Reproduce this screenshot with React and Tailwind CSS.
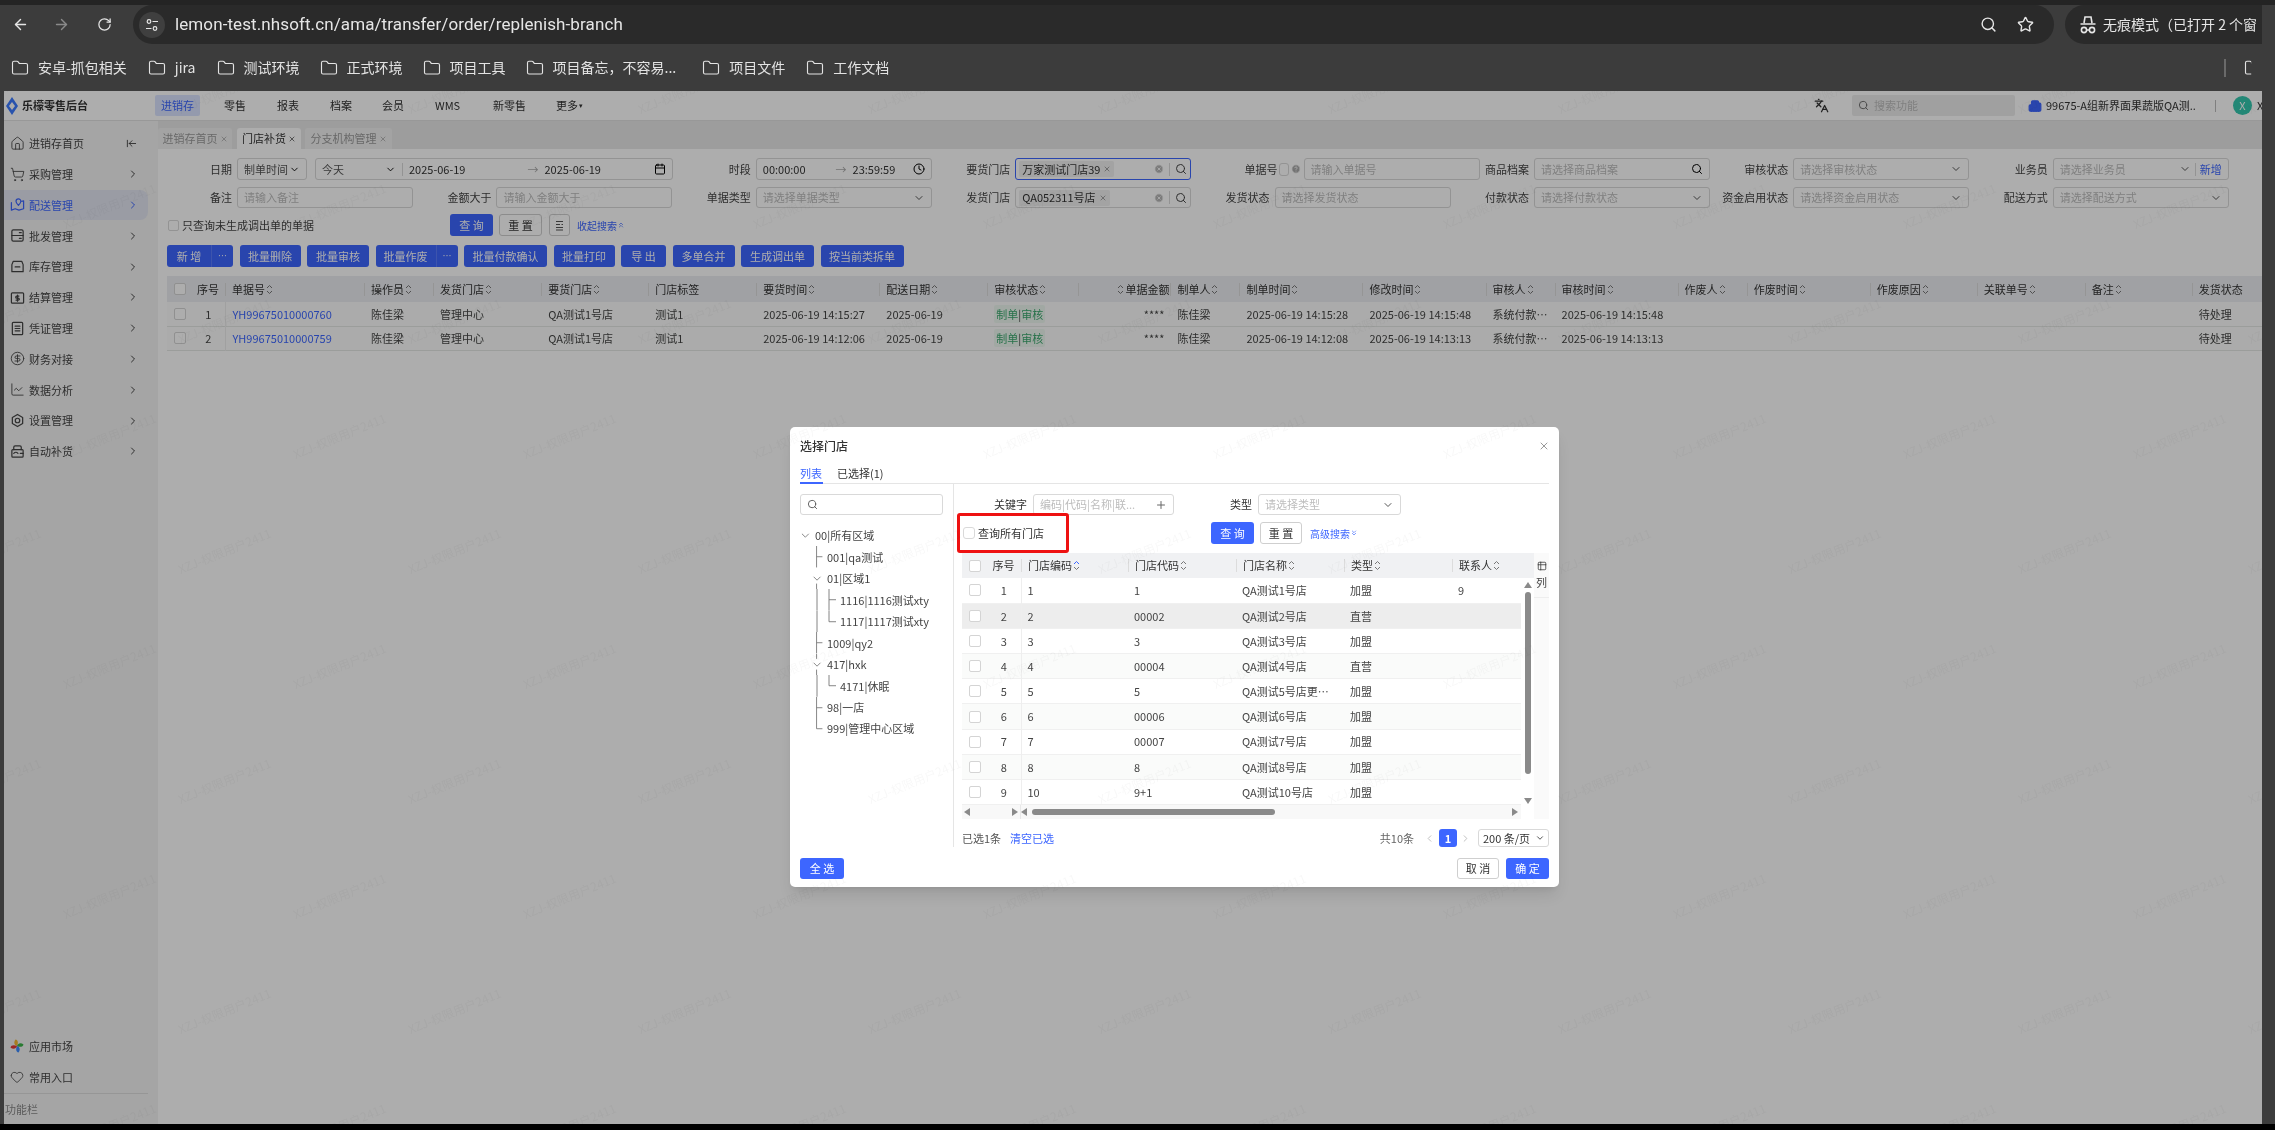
import React from 'react';
import {
    ArrowLeft, ArrowRight, RotateCw, Search, Star, Folder, Languages, House, ShoppingCart, ChevronRight,
    ChevronDown, ChevronLeft, Calendar, Clock, X, Plus, CircleDollarSign, ChartLine, Heart, ArrowLeftToLine,
    CircleHelp, Building2, Table2, CircleX, ChevronsUp, ChevronsDown,
} from 'lucide-react';

const bookmarks = [
    { name: '安卓-抓包相关', cls: 'ml-[11px]' },
    { name: 'jira', cls: 'ml-[21px]' },
    { name: '测试环境', cls: 'ml-[21px]' },
    { name: '正式环境', cls: 'ml-[20px]' },
    { name: '项目工具', cls: 'ml-[20px]' },
    { name: '项目备忘，不容易...', cls: 'ml-[20px]' },
    { name: '项目文件', cls: 'ml-[26px]' },
    { name: '工作文档', cls: 'ml-[21px]' },
];

const BoxIcon = ({ children }) => (
    <svg width="15" height="15" viewBox="0 0 16 16" fill="none" stroke="currentColor" strokeWidth="1.3" strokeLinecap="round" strokeLinejoin="round">
        {children}
    </svg>
);

const sideItems = [
    { name: '进销存首页', icon: <House size={15} strokeWidth={1.4} /> },
    { name: '采购管理', icon: <ShoppingCart size={15} strokeWidth={1.4} /> },
    { name: '配送管理', active: true, icon: <BoxIcon><path d="M1.5 6v8l4-1.5 4 1.5 5-1.5V4l-2 .6" /><path d="M9 2a2.6 2.6 0 0 1 2.6 2.6C11.6 6.4 9 9 9 9S6.4 6.4 6.4 4.6A2.6 2.6 0 0 1 9 2z" /></BoxIcon> },
    { name: '批发管理', icon: <BoxIcon><rect x="2" y="2" width="12" height="12" rx="1.5" /><path d="M2 8h12M10 5h2M10 11h2" /></BoxIcon> },
    { name: '库存管理', icon: <BoxIcon><path d="M3.5 2.5h9L14 6v7.5H2V6z" /><path d="M5.5 8.5h5" /></BoxIcon> },
    { name: '结算管理', icon: <BoxIcon><rect x="1.5" y="3" width="13" height="11" rx="1" /><path d="M9.5 6.5H7.2a1 1 0 0 0 0 2.2h1.6a1 1 0 0 1 0 2.2H6.5M8 5.5v6.5" /></BoxIcon> },
    { name: '凭证管理', icon: <BoxIcon><rect x="2.5" y="1.5" width="11" height="13" rx="1" /><path d="M5.5 5.5h5M5.5 8h5M5.5 10.5h5" /></BoxIcon> },
    { name: '财务对接', icon: <CircleDollarSign size={15} strokeWidth={1.4} /> },
    { name: '数据分析', icon: <ChartLine size={15} strokeWidth={1.4} /> },
    { name: '设置管理', icon: <BoxIcon><path d="M8 1.5l5.5 3.2v6.6L8 14.5l-5.5-3.2V4.7z" /><circle cx="8" cy="8" r="2.4" /></BoxIcon> },
    { name: '自动补货', icon: <BoxIcon><path d="M4 6V3.5A1.5 1.5 0 0 1 5.5 2h5A1.5 1.5 0 0 1 12 3.5V6" /><rect x="2" y="6" width="12" height="8" rx="1" /><path d="M4 10c1.5-1.6 3-1.6 4.5 0M11 10h3" /></BoxIcon> },
];

// 列宽按截图量的
const mainCols = [
    { w: 'w-[25px]' }, { w: 'w-[33px]', title: '序号' }, { w: 'w-[139px]', title: '单据号', sort: true },
    { w: 'w-[69px]', title: '操作员', sort: true }, { w: 'w-[108px]', title: '发货门店', sort: true },
    { w: 'w-[107px]', title: '要货门店', sort: true }, { w: 'w-[108px]', title: '门店标签' },
    { w: 'w-[123px]', title: '要货时间', sort: true }, { w: 'w-[108px]', title: '配送日期', sort: true },
    { w: 'w-[91px]', title: '审核状态', sort: true }, { w: 'w-[92px]', title: '单据金额', sort: true, right: true },
    { w: 'w-[69px]', title: '制单人', sort: true }, { w: 'w-[123px]', title: '制单时间', sort: true },
    { w: 'w-[123px]', title: '修改时间', sort: true }, { w: 'w-[69px]', title: '审核人', sort: true },
    { w: 'w-[123px]', title: '审核时间', sort: true }, { w: 'w-[69px]', title: '作废人', sort: true },
    { w: 'w-[123px]', title: '作废时间', sort: true }, { w: 'w-[107px]', title: '作废原因', sort: true },
    { w: 'w-[108px]', title: '关联单号', sort: true }, { w: 'w-[107px]', title: '备注', sort: true },
    { w: 'w-[70px]', title: '发货状态' },
];

const mainRows = [
    ['1', 'YH99675010000760', '陈佳梁', '管理中心', 'QA测试1号店', '测试1', '2025-06-19 14:15:27', '2025-06-19', 'tag', '****', '陈佳梁', '2025-06-19 14:15:28', '2025-06-19 14:15:48', '系统付款…', '2025-06-19 14:15:48', '', '', '', '', '', '待处理'],
    ['2', 'YH99675010000759', '陈佳梁', '管理中心', 'QA测试1号店', '测试1', '2025-06-19 14:12:06', '2025-06-19', 'tag', '****', '陈佳梁', '2025-06-19 14:12:08', '2025-06-19 14:13:13', '系统付款…', '2025-06-19 14:13:13', '', '', '', '', '', '待处理'],
];

const storeCols = [
    { w: 'w-[25px]' }, { w: 'w-[34px]', title: '序号' }, { w: 'w-[107px]', title: '门店编码', sort: true, active: true },
    { w: 'w-[108px]', title: '门店代码', sort: true }, { w: 'w-[108px]', title: '门店名称', sort: true },
    { w: 'w-[108px]', title: '类型', sort: true }, { w: 'w-[69px]', title: '联系人', sort: true },
];

const stores = [
    ['1', '1', '1', 'QA测试1号店', '加盟', '9'],
    ['2', '2', '00002', 'QA测试2号店', '直营', ''],
    ['3', '3', '3', 'QA测试3号店', '加盟', ''],
    ['4', '4', '00004', 'QA测试4号店', '直营', ''],
    ['5', '5', '5', 'QA测试5号店更…', '加盟', ''],
    ['6', '6', '00006', 'QA测试6号店', '加盟', ''],
    ['7', '7', '00007', 'QA测试7号店', '加盟', ''],
    ['8', '8', '8', 'QA测试8号店', '加盟', ''],
    ['9', '10', '9+1', 'QA测试10号店', '加盟', ''],
];

const treeRows = [
    { text: '00|所有区域', svg: 'w-[15px]', d: 'M2 9l3.500 3.500L9 9' },
    { text: '001|qa测试', svg: 'w-[27px]', d: 'M17 0v22M17 11h6' },
    { text: '01|区域1', svg: 'w-[27px]', d: 'M14 9l3.500 3.500L21 9M17 16v6' },
    { text: '1116|1116测试xty', svg: 'w-[40px]', d: 'M17 0v22M29 0v22M29 11h7' },
    { text: '1117|1117测试xty', svg: 'w-[40px]', d: 'M17 0v22M29 0v11h7' },
    { text: '1009|qy2', svg: 'w-[27px]', d: 'M17 0v22M17 11h6' },
    { text: '417|hxk', svg: 'w-[27px]', d: 'M14 9l3.500 3.500L21 9M17 0v5M17 16v6' },
    { text: '4171|休眠', svg: 'w-[40px]', d: 'M17 0v22M29 0v11h7' },
    { text: '98|一店', svg: 'w-[27px]', d: 'M17 0v22M17 11h6' },
    { text: '999|管理中心区域', svg: 'w-[27px]', d: 'M17 0v11h6' },
];

const Sort = ({ active }) => (
    <svg width="7" height="13" viewBox="0 0 7 13" fill="none" strokeWidth="1" className="shrink-0">
        <path d="M1 5l2.500-2.500L6 5" stroke={active ? '#3d66ff' : '#777'} />
        <path d="M1 8l2.500 2.500L6 8" stroke="#777" />
    </svg>
);

const Check = () => <span className="block h-[12px] w-[12px] rounded-[2px] border border-[#d4d4d4] bg-white" />;

const Btn = ({ children, className = '' }) => (
    <button className={`h-full rounded-[3px] bg-[#3d66ff] text-[11px] text-white ${className}`}>{children}</button>
);

const Plain = ({ children, className = '' }) => (
    <button className={`rounded-[3px] border border-[#cfcfcf] bg-white text-[11px] text-[#333] ${className}`}>{children}</button>
);

const Box = ({ children, className = 'w-[176px]' }) => (
    <div className={`flex h-full items-center rounded-[3px] border border-[#d9d9d9] bg-white px-[6px] text-[11px] ${className}`}>{children}</div>
);

const Ph = ({ children }) => <span className="flex-1 truncate text-[#bdbdbd]">{children}</span>;

const Cell = ({ label, children, span = '' }) => (
    <div className={`flex h-full items-center ${span}`}>
        <label className="mr-[5px] w-[69px] shrink-0 text-right text-[11px] text-[#444]">{label}</label>
        {children}
    </div>
);

const SelectBox = ({ ph }) => (
    <Box><Ph>{ph}</Ph><ChevronDown size={12} className="text-[#555]" /></Box>
);

const StoreTag = ({ name, focus }) => (
    <Box className={`w-[176px] !pl-[3px] !pr-[3px] ${focus ? '!border-[#3d66ff]' : ''}`}>
        <span className="flex h-[16px] items-center rounded-[2px] bg-[#f0f0f0] px-[3px] text-[#333]">
            {name}<X size={8} className="ml-[3px] text-[#777]" />
        </span>
        <span className="ml-auto flex items-center">
            <CircleX size={10} className="fill-[#b5b5b5] text-white" />
            <span className="mx-[5px] h-[13px] border-l border-[#d9d9d9]" />
            <Search size={12} className="text-[#444]" />
        </span>
    </Box>
);

// 水印，页面上错开铺满
const Watermarks = () => {
    const marks = [];
    for (let r = 0; r < 10; r++) {
        for (let c = 0; c < 11; c++) {
            marks.push({ x: (r % 2 ? 106 : -9) + 230 * c, y: 115 * r - 1 });
        }
    }
    return (
        <div className="pointer-events-none absolute inset-0 z-20 overflow-hidden">
            {marks.map((m, i) => (
                <span
                    key={i}
                    className="absolute -rotate-[22deg] text-[12px] text-black/[.03]"
                    style={{ left: m.x - 50, top: m.y - 8 }}
                >
                    XZJ-权限用户2411
                </span>
            ))}
        </div>
    );
};

const BrowserBar = () => (
    <div className="shrink-0 bg-[#3c3c3c]">
        <div className="flex h-[44px] border-t-[5px] border-[#242424] text-[#e6e6e6]">
            <div className="flex w-[133px] items-center pl-[12px]">
                <ArrowLeft size={17} />
                <ArrowRight size={17} className="ml-[24px] text-[#8a8a8a]" />
                <RotateCw size={15} className="ml-[27px]" />
            </div>
            <div className="flex w-[1921px] items-center rounded-[20px] bg-[#2a2a2a] pr-[20px]">
                <span className="ml-[6px] flex h-[26px] w-[26px] items-center justify-center rounded-full bg-[#3f3f3f]">
                    <svg width="14" height="14" viewBox="0 0 14 14" fill="none" stroke="#e6e6e6" strokeWidth="1.2">
                        <circle cx="4" cy="3.500" r="1.800" /><path d="M7.500 3.500H13M1 10.500h5.500" /><circle cx="10" cy="10.500" r="1.800" />
                    </svg>
                </span>
                <span className="ml-[10px] font-['Roboto'] text-[17px] tracking-[.1px]">lemon-test.nhsoft.cn/ama/transfer/order/replenish-branch</span>
                <Search size={17} className="ml-auto" />
                <Star size={17} className="ml-[20px]" />
            </div>
            <div className="ml-[11px] flex w-[197px] items-center overflow-hidden rounded-l-[20px] bg-[#2a2a2a] pl-[14px] text-[14px]">
                <svg width="18" height="20" viewBox="0 0 18 20" fill="none" stroke="#e6e6e6" strokeWidth="1.6" className="shrink-0">
                    <path d="M5 8l1-6h6l1 6M1.500 9h15" /><circle cx="5" cy="15" r="2.600" /><circle cx="13" cy="15" r="2.600" /><path d="M7.600 15h2.800" />
                </svg>
                <span className="ml-[6px]">无痕模式（已打开 2 个窗</span>
            </div>
            <div className="w-[13px]" />
        </div>
        <div className="flex h-[47px] items-center text-[14px] text-[#e3e3e3]">
            {bookmarks.map((b) => (
                <div key={b.name} className={`flex items-center ${b.cls}`}>
                    <Folder size={18} strokeWidth={1.5} />
                    <span className="ml-[9px]">{b.name}</span>
                </div>
            ))}
            <span className="ml-auto h-[18px] border-l-2 border-[#6a6a6a]" />
            <Folder size={18} strokeWidth={1.5} className="ml-[18px] mr-[13px] [clip-path:inset(0_60%_0_0)]" />
        </div>
    </div>
);

const TopNav = () => (
    <div className="flex h-[30px] shrink-0 items-center border-b border-[#e0e0e0] bg-white text-[11px] text-[#333]">
        <svg width="12" height="18" viewBox="0 0 12 18" className="ml-[2px] shrink-0">
            <path d="M6 0l6 9-6 9-6-9z" fill="#3d7bff" /><path d="M6 5l3 4-3 4-3-4z" fill="#fff" />
        </svg>
        <span className="ml-[4px] w-[67px] font-bold">乐檬零售后台</span>
        <span className="ml-[66px] flex h-[21px] w-[45px] items-center justify-center rounded-[2px] bg-[#dbe4ff] text-[#3d66ff]">进销存</span>
        <span className="ml-[24px] w-[22px]">零售</span>
        <span className="ml-[31px] w-[22px]">报表</span>
        <span className="ml-[31px] w-[22px]">档案</span>
        <span className="ml-[30px] w-[22px]">会员</span>
        <span className="ml-[31px] w-[28px]">WMS</span>
        <span className="ml-[30px] w-[33px]">新零售</span>
        <span className="ml-[30px] flex items-center">更多<span className="ml-[1px] text-[7px]">▾</span></span>
        <Languages size={15} className="ml-auto shrink-0" />
        <div className="ml-[23px] flex h-[21px] w-[163px] items-center rounded-[2px] bg-[#ececec] pl-[6px] text-[#bdbdbd]">
            <Search size={11} className="text-[#666]" /><span className="ml-[5px]">搜索功能</span>
        </div>
        <Building2 size={14} className="ml-[13px] shrink-0 fill-[#3d66ff] text-[#3d66ff]" />
        <span className="ml-[4px] w-[150px] overflow-hidden">99675-A组新界面果蔬版QA测...</span>
        <span className="ml-[19px] h-[12px] border-l border-[#bbb]" />
        <span className="ml-[17px] flex h-[19px] w-[19px] shrink-0 items-center justify-center rounded-full bg-[#34c7ae] text-white">X</span>
        <span className="ml-[5px] w-[5px] overflow-hidden">X</span>
    </div>
);

const Sidebar = () => (
    <aside className="flex w-[154px] shrink-0 flex-col bg-[#f3f3f3] pt-[7px] text-[11px] text-[#444]">
        {sideItems.map((it, i) => (
            <div
                key={it.name}
                className={`flex h-[30.800px] w-[144px] items-center rounded-r-[8px] pl-[6px] ${it.active ? 'bg-[#e3e6f2] text-[#3d66ff]' : ''}`}
            >
                <span className="w-[19px]">{it.icon}</span>
                <span>{it.name}</span>
                {i === 0
                    ? <ArrowLeftToLine size={11} className="ml-auto mr-[11px]" />
                    : <ChevronRight size={12} className="ml-auto mr-[9px]" />}
            </div>
        ))}
        <div className="mt-auto w-[144px]">
            <div className="flex h-[31px] items-center pl-[6px]">
                <svg width="14" height="14" viewBox="0 0 14 14" className="mr-[5px]">
                    <path d="M7 7C4 6 3.500 3 5.500.5 8 1 8.500 4 7 7z" fill="#f5b82e" />
                    <path d="M7 7c1-3 4-3.500 6.500-1.500C13 8 10 8.500 7 7z" fill="#3db54a" />
                    <path d="M7 7c3 1 3.500 4 1.500 6.500C6 13 5.500 10 7 7z" fill="#3d8bff" />
                    <path d="M7 7c-1 3-4 3.500-6.500 1.500C1 6 4 5.500 7 7z" fill="#e53935" />
                </svg>
                <span>应用市场</span>
            </div>
            <div className="flex h-[31px] items-center pl-[6px]">
                <Heart size={14} strokeWidth={1.4} className="mr-[5px]" /><span>常用入口</span>
            </div>
            <div className="border-t border-[#dedede] pt-[7px] pb-[7px] pl-[1px] text-[#888]">功能栏</div>
        </div>
    </aside>
);

const Tabs = () => (
    <div className="flex h-[28px] shrink-0 items-end bg-[#e8e8e8] text-[11px] text-[#999]">
        <div className="flex h-[21px] w-[74px] items-center justify-center rounded-t-[3px] bg-[#f1f1f1]">进销存首页<X size={8} className="ml-[2px]" /></div>
        <div className="ml-[5px] flex h-[21px] w-[64px] items-center justify-center rounded-t-[3px] bg-white text-[#333]">门店补货<X size={8} className="ml-[2px]" /></div>
        <div className="ml-[4px] flex h-[21px] w-[87px] items-center justify-center rounded-t-[3px] bg-[#f1f1f1]">分支机构管理<X size={8} className="ml-[2px]" /></div>
    </div>
);

const Filters = () => (
    <div className="px-[5px] pt-[9px]">
        <div className="grid h-[22px] grid-cols-[repeat(8,259.4px)]">
            <Cell label="日期" span="col-span-2">
                <Box className="w-[70px]"><span className="flex-1 text-[#555]">制单时间</span><ChevronDown size={11} /></Box>
                <Box className="ml-[8px] w-[358px]">
                    <span className="w-[63px] text-[#555]">今天</span><ChevronDown size={11} />
                    <span className="mx-[6px] h-[13px] border-l border-[#d9d9d9]" />
                    <span className="text-[#333]">2025-06-19</span>
                    <span className="ml-[62px] text-[#aaa]">→</span>
                    <span className="ml-[6px] text-[#333]">2025-06-19</span>
                    <Calendar size={12} className="ml-auto" />
                </Box>
            </Cell>
            <Cell label="时段">
                <Box>
                    <span className="text-[#333]">00:00:00</span>
                    <span className="ml-[30px] text-[#aaa]">→</span>
                    <span className="ml-[6px] text-[#333]">23:59:59</span>
                    <Clock size={12} className="ml-auto" />
                </Box>
            </Cell>
            <Cell label="要货门店"><StoreTag name="万家测试门店39" focus /></Cell>
            <div className="flex h-full items-center">
                <label className="ml-[44px] w-[33px] text-[11px] text-[#444]">单据号</label>
                <span className="ml-[1px] h-[13px] w-[10px] shrink-0 rounded-[3px] border border-[#d9d9d9] bg-white" />
                <CircleHelp size={10} className="ml-[2px] shrink-0 fill-[#aaa] text-white" />
                <Box className="ml-[3px] w-[176px] shrink-0"><Ph>请输入单据号</Ph></Box>
            </div>
            <Cell label="商品档案"><Box><Ph>请选择商品档案</Ph><Search size={12} /></Box></Cell>
            <Cell label="审核状态"><SelectBox ph="请选择审核状态" /></Cell>
            <Cell label="业务员">
                <Box className="w-[176px]">
                    <Ph>请选择业务员</Ph><ChevronDown size={12} className="text-[#555]" />
                    <span className="mx-[4px] h-[13px] border-l border-[#d9d9d9]" />
                    <span className="text-[#3d66ff]">新增</span>
                </Box>
            </Cell>
        </div>
        <div className="mt-[7px] grid h-[21px] grid-cols-[repeat(8,259.4px)]">
            <Cell label="备注"><Box><Ph>请输入备注</Ph></Box></Cell>
            <Cell label="金额大于"><Box><Ph>请输入金额大于</Ph></Box></Cell>
            <Cell label="单据类型"><SelectBox ph="请选择单据类型" /></Cell>
            <Cell label="发货门店"><StoreTag name="QA052311号店" /></Cell>
            <Cell label="发货状态"><Box><Ph>请选择发货状态</Ph></Box></Cell>
            <Cell label="付款状态"><SelectBox ph="请选择付款状态" /></Cell>
            <Cell label="资金启用状态"><SelectBox ph="请选择资金启用状态" /></Cell>
            <Cell label="配送方式"><SelectBox ph="请选择配送方式" /></Cell>
        </div>
        <div className="mt-[6px] flex h-[22px] items-center pl-[5px] text-[11px] text-[#444]">
            <span className="flex w-[282px] items-center">
                <span className="h-[11px] w-[11px] rounded-[2px] border border-[#d9d9d9] bg-white" />
                <span className="ml-[3px]">只查询未生成调出单的单据</span>
            </span>
            <Btn className="w-[43px]">查 询</Btn>
            <Plain className="ml-[6px] h-full w-[43px]">重 置</Plain>
            <Plain className="ml-[7px] flex h-full w-[21px] items-center justify-center">
                <svg width="9" height="11" viewBox="0 0 9 11" fill="none" stroke="#555" strokeWidth="1"><path d="M1 1.500h7M1 4.500h4M1 7.500h7M6.500 4.500h1.500M1 10h7" /></svg>
            </Plain>
            <span className="ml-[7px] flex items-center text-[10px] text-[#3d66ff]">收起搜索<ChevronsUp size={8} /></span>
        </div>
    </div>
);

const Actions = () => (
    <div className="ml-[9px] mt-[9px] flex h-[22px] gap-[6.500px] text-[11px] text-white">
        <div className="flex h-full w-[66px] rounded-[3px] bg-[#3d66ff]">
            <span className="flex w-[45px] items-center justify-center border-r border-[#5a7cff]">新 增</span>
            <span className="flex flex-1 items-center justify-center text-[9px]">⋯</span>
        </div>
        <Btn className="w-[61px]">批量删除</Btn>
        <Btn className="w-[62px]">批量审核</Btn>
        <div className="flex h-full w-[82px] rounded-[3px] bg-[#3d66ff]">
            <span className="flex w-[61px] items-center justify-center border-r border-[#5a7cff]">批量作废</span>
            <span className="flex flex-1 items-center justify-center text-[9px]">⋯</span>
        </div>
        <Btn className="w-[83px]">批量付款确认</Btn>
        <Btn className="w-[61px]">批量打印</Btn>
        <Btn className="w-[45px]">导 出</Btn>
        <Btn className="w-[62px]">多单合并</Btn>
        <Btn className="w-[73px]">生成调出单</Btn>
        <Btn className="w-[83px]">按当前类拆单</Btn>
    </div>
);

const HeadCell = ({ col, first }) => (
    <th className="p-0 font-normal">
        {col.title ? (
            <div className={`flex h-[13px] items-center gap-[1px] border-l border-[#dcdcdc] pl-[6px] pr-[1px] ${col.right ? 'justify-end' : ''} ${first ? 'justify-center !border-l-0 !pl-0' : ''}`}>
                {col.right && <Sort />}
                <span>{col.title}</span>
                {col.sort && !col.right && <Sort active={col.active} />}
            </div>
        ) : (
            <div className="flex justify-center"><Check /></div>
        )}
    </th>
);

const MainTable = () => (
    <div className="mt-[9px] ml-[9px] overflow-hidden">
        <table className="w-[2095px] table-fixed border-collapse text-[11px] text-[#444]">
            <colgroup>{mainCols.map((c, i) => <col key={i} className={c.w} />)}</colgroup>
            <thead>
                <tr className="h-[26px] bg-[#eceef2] text-left text-[#333]">
                    {mainCols.map((c, i) => <HeadCell key={i} col={c} first={i === 1} />)}
                </tr>
            </thead>
            <tbody>
                {mainRows.map((row) => (
                    <tr key={row[1]} className="h-[24px] border-b border-[#e5e7e5] bg-[#fcfdfc]">
                        <td className="p-0"><div className="flex justify-center"><Check /></div></td>
                        <td className="border-r border-[#ececec] p-0 text-center">{row[0]}</td>
                        {row.slice(1).map((v, i) => (
                            <td key={i} className={`truncate py-0 pl-[7px] pr-0 ${i === 0 ? 'text-[#3d66ff]' : ''} ${v === '****' ? 'pr-[6px] text-right' : ''}`}>
                                {v === 'tag'
                                    ? <span className="rounded-[2px] bg-[#eef8f0] px-[2px] py-[1px] text-[#3aa76d]">制单<span className="text-[#444]">|</span>审核</span>
                                    : v}
                            </td>
                        ))}
                    </tr>
                ))}
            </tbody>
        </table>
    </div>
);

const Tree = () => (
    <div className="mt-[10px] text-[11px] text-[#444]">
        {treeRows.map((r) => (
            <div key={r.text} className="flex h-[21.450px] items-center">
                <svg viewBox="0 0 40 22" preserveAspectRatio="xMinYMid slice" className={`h-full shrink-0 ${r.svg}`} fill="none" stroke="#777" strokeWidth="0.9">
                    <path d={r.d} />
                </svg>
                <span>{r.text}</span>
            </div>
        ))}
    </div>
);

const Tri = ({ d }) => (
    <svg width="8" height="8" viewBox="0 0 8 8" className="shrink-0"><path d={d} fill="#8a8a8a" /></svg>
);

const StoreTable = () => (
    <div className="mt-[9px] flex h-[266px] w-[587px] text-[11px] text-[#444]">
        <div className="w-[559px]">
            <table className="w-[559px] table-fixed border-collapse">
                <colgroup>{storeCols.map((c, i) => <col key={i} className={c.w} />)}</colgroup>
                <thead>
                    <tr className="h-[25px] bg-[#f0f1f3] text-left text-[#333]">
                        {storeCols.map((c, i) => <HeadCell key={i} col={c} first={i === 1} />)}
                    </tr>
                </thead>
                <tbody>
                    {stores.map((s, idx) => (
                        <tr key={s[0]} className={`h-[25.200px] border-b border-[#f0f0f0] ${idx === 1 ? 'bg-[#ededed]' : idx % 2 ? 'bg-[#fafbfa]' : 'bg-white'}`}>
                            <td className="p-0"><div className="flex justify-center"><Check /></div></td>
                            <td className="border-r border-[#eeeeee] p-0 text-center">{s[0]}</td>
                            {s.slice(1).map((v, i) => <td key={i} className="truncate py-0 pl-[6px] pr-[2px]">{v}</td>)}
                        </tr>
                    ))}
                </tbody>
            </table>
            <div className="flex h-[14px] items-center bg-[#f8f8f8]">
                <div className="flex h-full w-[59px] items-center justify-between border-r border-[#e8e8e8] px-[2px]">
                    <Tri d="M6 0v8L0 4z" /><Tri d="M2 0v8l6-4z" />
                </div>
                <Tri d="M6 0v8L0 4z" />
                <div className="ml-[3px] h-[6px] w-[243px] rounded-full bg-[#8a8a8a]" />
                <span className="ml-auto mr-[3px]"><Tri d="M2 0v8l6-4z" /></span>
            </div>
        </div>
        <div className="w-[13px]">
            <div className="h-[25px] bg-[#f0f1f3]" />
            <div className="flex h-[241px] flex-col items-center bg-white pt-[3px]">
                <Tri d="M4 1l4 6H0z" />
                <div className="mt-[3px] h-[182px] w-[6px] rounded-full bg-[#8a8a8a]" />
                <div className="mt-auto mb-[14px]"><Tri d="M4 7L0 1h8z" /></div>
            </div>
        </div>
        <div className="w-[15px] bg-[#fafafa]">
            <div className="flex h-[45px] flex-col items-center border-b border-[#eeeeee] pt-[8px]">
                <Table2 size={10} />
                <span className="mt-[3px]">列</span>
            </div>
        </div>
    </div>
);

const StoreDialog = () => (
    <div className="absolute left-[786px] top-[336px] z-10 flex h-[460px] w-[769px] flex-col rounded-[5px] bg-white px-[10px] text-[11px] text-[#333] shadow-lg">
        <div className="flex h-[38px] shrink-0 items-center text-[12px] font-medium">
            选择门店
            <X size={12} className="ml-auto mr-[-1px] text-[#999]" />
        </div>
        <div className="flex h-[19px] shrink-0 border-b border-[#e5e5e5]">
            <span className="h-[19px] w-[23px] shrink-0 border-b-2 border-[#3d66ff] text-[#3d66ff]">列表</span>
            <span className="ml-[14px]">已选择(1)</span>
        </div>
        <div className="flex h-[363px] shrink-0">
            <div className="w-[154px] shrink-0 border-r border-[#e5e5e5] pt-[10px]">
                <div className="flex h-[21px] w-[143px] items-center rounded-[3px] border border-[#d9d9d9] pl-[6px]">
                    <Search size={11} className="text-[#555]" />
                </div>
                <Tree />
            </div>
            <div className="relative flex-1 pl-[8px] pt-[10px]">
                <div className="flex h-[21px] items-center">
                    <label className="mr-[6px] w-[65px] text-right">关键字</label>
                    <Box className="w-[141px]"><Ph>编码|代码|名称|联...</Ph><Plus size={12} className="text-[#666]" /></Box>
                    <label className="mr-[6px] w-[78px] text-right">类型</label>
                    <Box className="w-[143px]"><Ph>请选择类型</Ph><ChevronDown size={12} className="text-[#555]" /></Box>
                </div>
                <div className="mt-[7px] flex h-[22px] items-center">
                    <div className="flex w-[249px] items-center pl-[1px]">
                        <span className="h-[12px] w-[12px] rounded-[3px] border border-[#d9d9d9]" />
                        <span className="ml-[3px]">查询所有门店</span>
                    </div>
                    <Btn className="w-[43px]">查 询</Btn>
                    <Plain className="ml-[6px] h-full w-[42px]">重 置</Plain>
                    <span className="ml-[8px] flex items-center text-[10px] text-[#3d66ff]">高级搜索<ChevronsDown size={8} /></span>
                </div>
                <StoreTable />
                <div className="mt-[10px] flex h-[18px] items-center">
                    <span className="text-[#555]">已选1条</span>
                    <span className="ml-[9px] text-[#3d66ff]">清空已选</span>
                    <span className="ml-auto text-[#666]">共10条</span>
                    <ChevronLeft size={11} className="ml-[10px] text-[#bbb]" />
                    <span className="ml-[4px] flex h-[18px] w-[18px] items-center justify-center rounded-[3px] bg-[#3d66ff] font-bold text-white">1</span>
                    <ChevronRight size={11} className="ml-[3px] text-[#bbb]" />
                    <div className="ml-[7px] flex h-[18px] w-[71px] items-center rounded-[3px] border border-[#d9d9d9] pl-[4px]">
                        200 条/页<ChevronDown size={10} className="ml-auto mr-[3px]" />
                    </div>
                </div>
                {/* 红框标注 */}
                <div className="absolute left-[3px] top-[29px] h-[40px] w-[112px] rounded-[3px] border-[3px] border-[#ee1111]" />
            </div>
        </div>
        <div className="mt-[11px] flex h-[21px] shrink-0">
            <Btn className="w-[44px]">全 选</Btn>
            <Plain className="ml-auto h-full w-[42px]">取 消</Plain>
            <Btn className="ml-[7px] w-[43px]">确 定</Btn>
        </div>
    </div>
);

const App = () => (
    <div className="flex h-[1130px] w-[2275px] flex-col overflow-hidden bg-black whitespace-nowrap blur-[0.3px] [font-family:'Noto_Sans_CJK_SC','Noto_Sans',sans-serif]">
        <BrowserBar />
        <div className="flex h-[1033px] shrink-0 bg-[#3c3c3c] pl-[4px] pr-[13px]">
            <div className="relative flex min-w-0 flex-1 flex-col overflow-hidden bg-white">
                <TopNav />
                <div className="flex min-h-0 flex-1">
                    <Sidebar />
                    <main className="min-w-0 flex-1">
                        <Tabs />
                        <Filters />
                        <Actions />
                        <MainTable />
                    </main>
                </div>
                <div className="absolute inset-0 bg-black/[.32]" />
                <StoreDialog />
                <Watermarks />
            </div>
        </div>
    </div>
);

export default App;
